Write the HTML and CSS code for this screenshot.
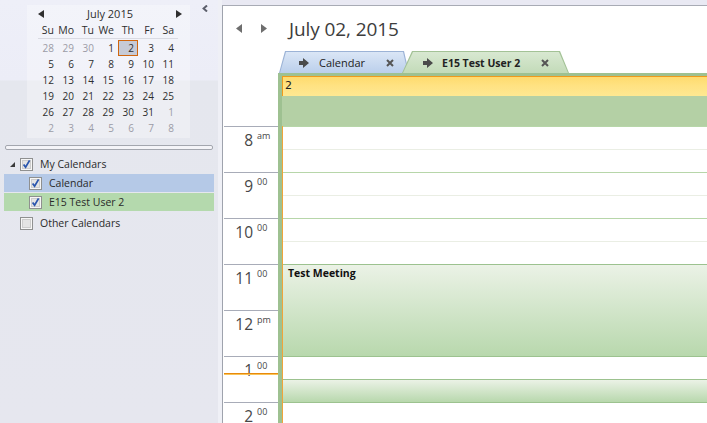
FILE: index.html
```html
<!DOCTYPE html>
<html lang="en">
<head>
    <meta charset="UTF-8">
    <title>Calendar - Day View</title>
    <link rel="stylesheet" href="styles.css">
</head>
<body>
<div class="app">

    <aside class="sidebar">
        <div class="sidebar-top">
            <div class="minical">
                <div class="minical-head">
                    <svg width="6" height="8" viewBox="0 0 6 8"><path d="M6 0V8L0 4Z" fill="#2f2f2f"/></svg>
                    <span class="month">July 2015</span>
                    <svg width="6" height="8" viewBox="0 0 6 8"><path d="M0 0V8L6 4Z" fill="#2f2f2f"/></svg>
                </div>
                <div class="minical-grid">
                    <span class="dow">Su</span><span class="dow">Mo</span><span class="dow">Tu</span><span class="dow">We</span><span class="dow">Th</span><span class="dow">Fr</span><span class="dow">Sa</span>
                    <span class="other">28</span><span class="other">29</span><span class="other">30</span><span>1</span><span class="today">2</span><span>3</span><span>4</span>
                    <span>5</span><span>6</span><span>7</span><span>8</span><span>9</span><span>10</span><span>11</span>
                    <span>12</span><span>13</span><span>14</span><span>15</span><span>16</span><span>17</span><span>18</span>
                    <span>19</span><span>20</span><span>21</span><span>22</span><span>23</span><span>24</span><span>25</span>
                    <span>26</span><span>27</span><span>28</span><span>29</span><span>30</span><span>31</span><span class="other">1</span>
                    <span class="other">2</span><span class="other">3</span><span class="other">4</span><span class="other">5</span><span class="other">6</span><span class="other">7</span><span class="other">8</span>
                </div>
            </div>
            <svg class="collapse" width="6" height="7" viewBox="0 0 6 7"><path d="M5 0.5L1.6 3.5L5 6.5" fill="none" stroke="#5c5f6b" stroke-width="2"/></svg>
        </div>

        <div class="divider"></div>

        <div class="tree">
            <div class="tree-row">
                <svg class="expander" width="5" height="5" viewBox="0 0 5 5"><path d="M5 0V5H0Z" fill="#3a3a3a"/></svg>
                <svg class="chk" width="13" height="13" viewBox="0 0 13 13"><rect x="0.5" y="0.5" width="12" height="12" fill="#f6f6f6" stroke="#8f9090"/><rect x="2.5" y="2.5" width="8" height="8" fill="#e4e4e4" stroke="#cdcdcd"/><path d="M3.6 6.4L5.6 9.2L9.6 2.4" fill="none" stroke="#2b56ad" stroke-width="1.8"/></svg>
                <span class="label">My Calendars</span>
            </div>
            <div class="tree-row child sel-blue">
                <svg class="chk" width="13" height="13" viewBox="0 0 13 13"><rect x="0.5" y="0.5" width="12" height="12" fill="#f6f6f6" stroke="#8f9090"/><rect x="2.5" y="2.5" width="8" height="8" fill="#e4e4e4" stroke="#cdcdcd"/><path d="M3.6 6.4L5.6 9.2L9.6 2.4" fill="none" stroke="#2b56ad" stroke-width="1.8"/></svg>
                <span class="label">Calendar</span>
            </div>
            <div class="tree-row child sel-green">
                <svg class="chk" width="13" height="13" viewBox="0 0 13 13"><rect x="0.5" y="0.5" width="12" height="12" fill="#f6f6f6" stroke="#8f9090"/><rect x="2.5" y="2.5" width="8" height="8" fill="#e4e4e4" stroke="#cdcdcd"/><path d="M3.6 6.4L5.6 9.2L9.6 2.4" fill="none" stroke="#2b56ad" stroke-width="1.8"/></svg>
                <span class="label">E15 Test User 2</span>
            </div>
            <div class="tree-row group-other">
                <svg class="chk" width="13" height="13" viewBox="0 0 13 13"><rect x="0.5" y="0.5" width="12" height="12" fill="#f6f6f6" stroke="#8f9090"/><rect x="2.5" y="2.5" width="8" height="8" fill="#e4e4e4" stroke="#cdcdcd"/></svg>
                <span class="label">Other Calendars</span>
            </div>
        </div>
    </aside>

    <div class="splitter"></div>

    <main class="day-view">
        <div class="day-header">
            <svg class="nav-arrow" width="6" height="9" viewBox="0 0 6 9"><path d="M6 0V9L0 4.5Z" fill="#6e6e6e"/></svg>
            <svg class="nav-arrow next" width="6" height="9" viewBox="0 0 6 9"><path d="M0 0V9L6 4.5Z" fill="#6e6e6e"/></svg>
            <h1 class="day-title">July 02, 2015</h1>
        </div>

        <div class="tabs">
            <div class="tab tab-cal">
                <div class="tab-face">
                    <svg class="tab-arrow" width="10" height="10" viewBox="0 0 10 10"><path d="M0 3H4V0L10 5L4 10V7H0Z" fill="#4b4b4b"/></svg>
                    <span class="tab-label">Calendar</span>
                    <svg class="tab-close" width="8" height="8" viewBox="0 0 8 8"><path d="M1 1L7 7M7 1L1 7" stroke="#555" stroke-width="2"/></svg>
                </div>
            </div>
            <div class="tab tab-user">
                <div class="tab-face">
                    <svg class="tab-arrow" width="10" height="10" viewBox="0 0 10 10"><path d="M0 3H4V0L10 5L4 10V7H0Z" fill="#4b4b4b"/></svg>
                    <span class="tab-label">E15 Test User 2</span>
                    <svg class="tab-close" width="8" height="8" viewBox="0 0 8 8"><path d="M1 1L7 7M7 1L1 7" stroke="#555" stroke-width="2"/></svg>
                </div>
            </div>
        </div>

        <div class="allday-row">
            <div class="gutter"></div>
            <div class="allday">
                <div class="date-bar">2</div>
            </div>
        </div>

        <div class="grid">
            <div class="times">
                <div class="hour"><span class="num">8</span><span class="sup">am</span></div>
                <div class="hour"><span class="num">9</span><span class="sup">00</span></div>
                <div class="hour"><span class="num">10</span><span class="sup">00</span></div>
                <div class="hour"><span class="num">11</span><span class="sup">00</span></div>
                <div class="hour"><span class="num">12</span><span class="sup">pm</span></div>
                <div class="hour"><span class="num">1</span><span class="sup">00</span></div>
                <div class="hour"><span class="num">2</span><span class="sup">00</span></div>
                <div class="now-line"></div>
            </div>
            <div class="slots">
                <div class="slot-col">
                    <div class="half"></div><div class="half low"></div>
                    <div class="half"></div><div class="half low"></div>
                    <div class="half"></div><div class="half low"></div>
                    <div class="half"></div><div class="half low"></div>
                    <div class="half"></div><div class="half low"></div>
                    <div class="half"></div><div class="half low"></div>
                    <div class="half"></div><div class="half low"></div>

                    <div class="event" style="top: 138px; height: 93px;">Test Meeting</div>
                    <div class="event" style="top: 253px; height: 24px;"></div>
                </div>
            </div>
        </div>
    </main>

</div>
</body>
</html>
```

FILE: styles.css
```css
body {
    margin: 0;
    font-family: 'Open Sans', 'Liberation Sans', sans-serif;
    color: #333;
    background-color: #e9e9f3;
    overflow: hidden;
}
.app {
    display: flex;
    height: 423px;
}

/* left navigation pane */
.sidebar {
    width: 218px;
    flex-shrink: 0;
    background: linear-gradient(#eeeff8 0, #ecedf7 80px, #e5e7ee 81px, #e6e7ef 100%);
}
.sidebar-top {
    display: flex;
    align-items: flex-start;
    padding: 5px 0 0 27px;
}
.minical {
    width: 163px;
    height: 133px;
    background-color: rgba(255, 255, 255, 0.3);
    font-size: 10px;
    color: #2e2e2e;
}
.minical-head {
    display: flex;
    align-items: center;
    justify-content: space-between;
    height: 17px;
    padding: 0 8px 0 11px;
}
.minical-head .month {
    font-size: 11px;
    line-height: 17px;
}
.minical-grid {
    display: grid;
    grid-template-columns: repeat(7, 20px);
    grid-template-rows: 18px repeat(6, 16px);
    margin-left: 11px;
}
.minical-grid span {
    text-align: right;
    padding-right: 4px;
    line-height: 16px;
    box-sizing: border-box;
}
.minical-grid .dow {
    border-bottom: 1px solid #d9dae2;
    height: 17px;
    font-size: 10.5px;
}
.minical-grid .other {
    color: #9c9ca6;
}
.minical-grid .today {
    border: 1px solid #d0660e;
    background-color: #c6cad6;
    padding-right: 3px;
    line-height: 14px;
}
.collapse {
    margin: 0 0 0 12px;
}
.divider {
    height: 5px;
    box-sizing: border-box;
    margin: 7px 5px 0 5px;
    border: 1px solid #a3a6ae;
    border-radius: 2px;
    background-color: #f4f4f8;
}
.tree {
    margin-top: 5px;
    font-size: 10.5px;
    color: #2a2a2a;
}
.tree-row {
    display: flex;
    align-items: center;
    height: 18px;
    margin: 0 4px 1px 4px;
    padding-left: 6px;
}
.tree-row .expander {
    margin-right: 5px;
}
.tree-row .label {
    margin-left: 7px;
}
.tree-row.child {
    padding-left: 25px;
}
.tree-row.group-other {
    padding-left: 16px;
    margin-top: 3px;
}
.sel-blue {
    background-color: #b5c9e7;
}
.sel-green {
    background-color: #b4d9ad;
}
.splitter {
    width: 4px;
    flex-shrink: 0;
    background-color: #eff0f6;
}

/* day view */
.day-view {
    flex: 1;
    margin-top: 5px;
    border-top: 1px solid #a8abb5;
    border-left: 1px solid #9fa3ad;
    background-color: #fff;
    display: flex;
    flex-direction: column;
    overflow: hidden;
}
.day-header {
    flex-shrink: 0;
    height: 45px;
    display: flex;
    align-items: center;
    padding: 0 0 0 13px;
}
.nav-arrow.next {
    margin-left: 19px;
}
.day-title {
    margin: 0 0 0 22px;
    font-size: 19px;
    font-weight: normal;
    color: #3d3d3d;
    letter-spacing: -0.1px;
}
.tabs {
    flex-shrink: 0;
    display: flex;
    align-items: flex-end;
    height: 22px;
    padding-left: 56px;
}
.tab {
    position: relative;
    height: 22px;
}
.tab-face {
    display: flex;
    align-items: center;
    height: 21px;
    margin: 1px 1px 0 1px;
    font-size: 11px;
    color: #222;
}
.tab-cal {
    width: 130px;
    background-color: #9cb3d6;
    clip-path: polygon(6px 0, calc(100% - 5px) 0, 100% 100%, 0 100%);
}
.tab-cal .tab-face {
    background: linear-gradient(#dae6f6, #bbcfeb);
    clip-path: polygon(6px 0, calc(100% - 5px) 0, 100% 100%, 0 100%);
    padding: 0 14px 0 19px;
}
.tab-user {
    width: 167px;
    margin-left: -7px;
    background-color: #a3c296;
    clip-path: polygon(10px 0, calc(100% - 9px) 0, 100% 100%, 0 100%);
}
.tab-user .tab-face {
    background: linear-gradient(#d8e8d1, #c3dbb9);
    clip-path: polygon(10px 0, calc(100% - 9px) 0, 100% 100%, 0 100%);
    padding: 0 19px 0 20px;
    font-weight: bold;
    font-size: 10.5px;
}
.tab-arrow {
    margin-right: 10px;
}
.tab-user .tab-arrow {
    margin-right: 9px;
}
.tab-close {
    margin-left: auto;
}
.allday-row {
    flex-shrink: 0;
    display: flex;
    height: 53px;
}
.gutter {
    width: 55px;
    flex-shrink: 0;
}
.allday {
    flex: 1;
    border-top: 3px solid #9ec191;
    border-left: 4px solid #9ec191;
    background-color: #b4d0a5;
}
.date-bar {
    height: 20px;
    box-sizing: border-box;
    border-top: 1px solid #ef9a1c;
    border-left: 1px solid #ef9a1c;
    background: linear-gradient(#fedb6e, #ffe282 45%, #fee892);
    font-family: 'DejaVu Sans', sans-serif;
    font-size: 11px;
    line-height: 18px;
    padding-left: 2px;
    color: #222;
}
.grid {
    display: flex;
    flex: 1;
    min-height: 0;
}
.times {
    width: 55px;
    flex-shrink: 0;
    position: relative;
}
.hour {
    display: flex;
    height: 46px;
    box-sizing: border-box;
    border-top: 1px solid #a8acb8;
    margin-left: 1px;
    color: #474747;
}
.hour .num {
    width: 29px;
    text-align: right;
    font-size: 15.5px;
    line-height: 16px;
    padding-top: 5px;
}
.hour .sup {
    margin-left: 4px;
    font-size: 9px;
    line-height: 9px;
    padding-top: 4px;
}
.now-line {
    position: absolute;
    top: 247px;
    left: 1px;
    right: 0;
    height: 1px;
    border-top: 1px solid #e88a0c;
    background-color: #f9c45a;
}
.slots {
    flex: 1;
    border-left: 4px solid #9ec191;
}
.slot-col {
    position: relative;
    border-left: 1px solid #f0a43a;
    height: 100%;
}
.half {
    height: 23px;
    box-sizing: border-box;
    border-top: 1px solid #b7d6a9;
}
.half.low {
    border-top-color: #eaeee4;
}
.event {
    position: absolute;
    left: 0;
    right: 0;
    box-sizing: border-box;
    border-top: 1px solid #9cc28f;
    border-bottom: 1px solid #9cc28f;
    background: linear-gradient(#ebf2e6, #b8d8ad);
    font-size: 10.5px;
    font-weight: bold;
    color: #111;
    padding: 1px 0 0 5px;
}
```
